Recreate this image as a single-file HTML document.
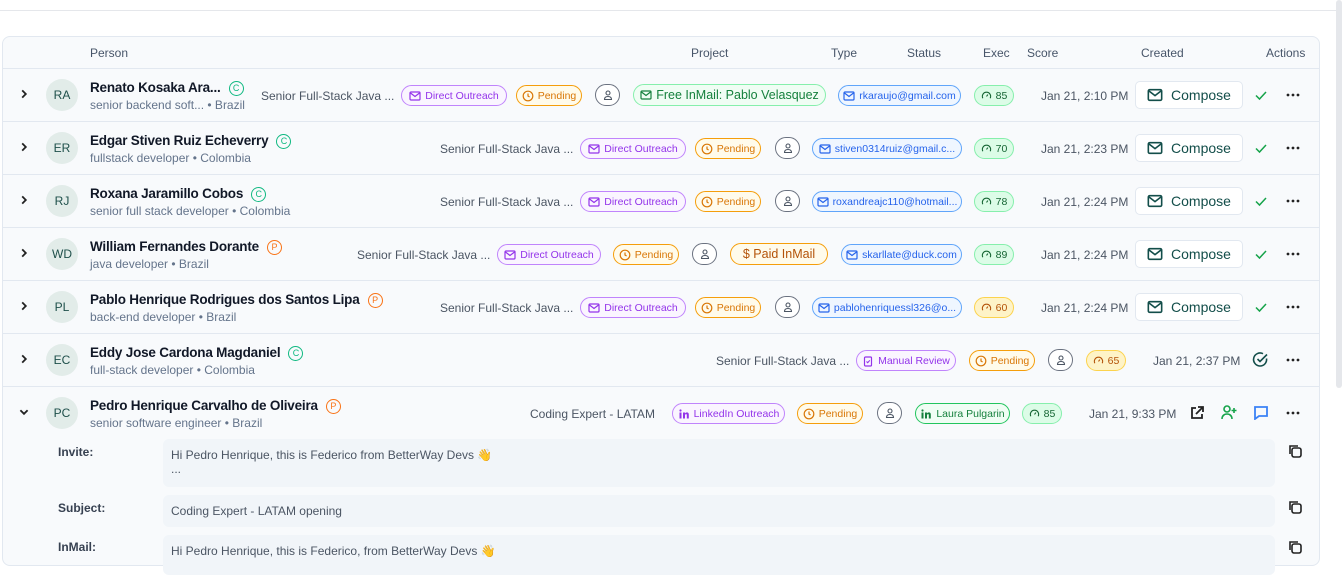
<!DOCTYPE html>
<html><head><meta charset="utf-8"><style>
*{margin:0;padding:0;box-sizing:border-box}
body{width:1342px;height:552px;overflow:hidden;background:#fff;font-family:"Liberation Sans",sans-serif;position:relative;color:#1f2937}
.a{position:absolute;white-space:nowrap}
.tbl{position:absolute;left:2px;top:36px;width:1318px;height:530px;border:1px solid #e2e8f0;border-radius:8px;background:#f8fafc}
.hl{position:absolute;left:3px;width:1316px;height:1px;background:#e2e8f0}
.th{position:absolute;top:46px;font-size:12px;color:#475569}
.p{position:absolute;height:21px;border:1px solid;border-radius:11px;font-size:10.5px;display:flex;align-items:center;justify-content:center;gap:4px;white-space:nowrap;overflow:hidden}
.p svg{flex:none}
.do{border-color:#c084fc;color:#9333ea;background:#faf5ff}
.pe{border-color:#f59e0b;color:#d97706;background:#fffbeb}
.em{border-color:#60a5fa;color:#2563eb;background:#eff6ff}
.sc{border-color:#86efac;color:#166534;background:#dcfce7}
.sy{border-color:#fcd34d;color:#b45309;background:#fef3c7}
.pr{border-color:#6b7280;background:#fff;width:25px;height:22px}
.gr{border-color:#86efac;color:#15803d;background:#f0fdf4}
.av{position:absolute;left:46px;width:32px;height:32px;border-radius:50%;background:#e2ece9;color:#1e4f4a;font-size:12px;display:flex;align-items:center;justify-content:center}
.nm{position:absolute;left:90px;font-size:13.5px;font-weight:bold;color:#111827;letter-spacing:-0.2px}
.sub{position:absolute;left:90px;font-size:12px;color:#64748b}
.bd{display:inline-flex;width:15px;height:15px;border-radius:50%;border:1.3px solid;font-size:9px;align-items:center;justify-content:center;font-weight:normal;vertical-align:1px;margin-left:8px}
.bc{border-color:#10b981;color:#10b981}.bp{border-color:#f97316;color:#f97316}
.prj{position:absolute;font-size:12px;color:#4b5563}
.dt{position:absolute;font-size:12px;color:#4b5563}
.cmp{position:absolute;left:1135px;width:108px;height:28px;border:1px solid #e2e8f0;border-radius:5px;background:#fff;display:flex;align-items:center;justify-content:center;gap:8px;font-size:14px;color:#134e4a}
.box{position:absolute;left:163px;width:1112px;background:#f1f5f9;border-radius:6px;font-size:12px;color:#4b5563;padding:9px 8px}
.lb{position:absolute;left:58px;font-size:12px;color:#374151;font-weight:bold}
.ch{position:absolute;left:18px}
.dots{position:absolute;left:1286px}
</style></head><body>
<svg width="0" height="0" style="position:absolute">
<defs>
<symbol id="mail" viewBox="0 0 12 12"><rect x="1" y="2" width="10" height="8" rx="1" fill="none" stroke="currentColor" stroke-width="1.2"/><path d="M1.5 3l4.5 3.5L10.5 3" fill="none" stroke="currentColor" stroke-width="1.2"/></symbol>
<symbol id="clk" viewBox="0 0 12 12"><circle cx="6" cy="6" r="4.8" fill="none" stroke="currentColor" stroke-width="1.2"/><path d="M6 3.5V6l1.6 1" fill="none" stroke="currentColor" stroke-width="1.2"/></symbol>
<symbol id="usr" viewBox="0 0 12 12"><circle cx="6" cy="4" r="2" fill="none" stroke="#4b5563" stroke-width="1.1"/><path d="M2.5 10.5c0-2 1.5-3 3.5-3s3.5 1 3.5 3z" fill="none" stroke="#4b5563" stroke-width="1.1"/></symbol>
<symbol id="gau" viewBox="0 0 12 12"><path d="M2 9a4.5 4.5 0 1 1 8 0M6 7l1.5-2" fill="none" stroke="currentColor" stroke-width="1.2"/></symbol>
<symbol id="chv" viewBox="0 0 10 10"><path d="M3.5 2l3 3-3 3" fill="none" stroke="#222" stroke-width="1.5"/></symbol>
<symbol id="dt3" viewBox="0 0 14 4"><circle cx="2" cy="2" r="1.4" fill="#222"/><circle cx="7" cy="2" r="1.4" fill="#222"/><circle cx="12" cy="2" r="1.4" fill="#222"/></symbol>
<symbol id="chk" viewBox="0 0 14 14"><path d="M2 7.5l3.5 3.5L12 4" fill="none" stroke="#16a34a" stroke-width="1.5"/></symbol>
<symbol id="li" viewBox="0 0 12 12"><rect x="1.5" y="4.5" width="2" height="6" fill="currentColor"/><circle cx="2.5" cy="2.5" r="1.1" fill="currentColor"/><path d="M5 10.5v-6h2v1c.5-.8 1.3-1.2 2.2-1.1 1 .1 1.6.9 1.6 2.1v4h-2V7c0-.6-.3-.9-.8-.9S7 6.5 7 7.1v3.4z" fill="currentColor"/></symbol>
<symbol id="clip" viewBox="0 0 12 12"><rect x="2.5" y="2" width="7" height="9" rx="1" fill="none" stroke="currentColor" stroke-width="1.2"/><path d="M4.5 6.5l1.2 1.2L7.8 5.3" fill="none" stroke="currentColor" stroke-width="1.1"/></symbol>
</defs></svg>
<div class="a" style="left:0;top:10px;width:1342px;height:1px;background:#e5e7eb"></div>
<div class="tbl"></div>
<div class="a" style="left:1336px;top:0;width:6px;height:388px;background:#e5e7eb;border-radius:3px"></div>
<div class="th" style="left:90px">Person</div>
<div class="th" style="left:691px">Project</div>
<div class="th" style="left:831px">Type</div>
<div class="th" style="left:907px">Status</div>
<div class="th" style="left:983px">Exec</div>
<div class="th" style="left:1027px">Score</div>
<div class="th" style="left:1141px">Created</div>
<div class="th" style="left:1266px">Actions</div>
<div class="hl" style="top:68px"></div>
<div class="hl" style="top:121px"></div>
<div class="hl" style="top:174px"></div>
<div class="hl" style="top:227px"></div>
<div class="hl" style="top:280px"></div>
<div class="hl" style="top:333px"></div>
<div class="hl" style="top:386px"></div>

<!-- Row 1 -->
<svg class="ch" style="top:88px" width="12" height="12"><use href="#chv"/></svg>
<div class="av" style="top:79px">RA</div>
<div class="nm" style="top:80px">Renato Kosaka Ara...<span class="bd bc">C</span></div>
<div class="sub" style="top:98px">senior backend soft... • Brazil</div>
<div class="prj" style="left:261px;top:89px">Senior Full-Stack Java ...</div>
<div class="p do" style="left:401px;top:85px;width:106px"><svg width="12" height="12"><use href="#mail"/></svg>Direct Outreach</div>
<div class="p pe" style="left:516px;top:85px;width:66px"><svg width="12" height="12"><use href="#clk"/></svg>Pending</div>
<div class="p pr" style="left:595px;top:84px"><svg width="12" height="12"><use href="#usr"/></svg></div>
<div class="p gr" style="left:633px;top:84px;width:193px;height:22px;font-size:12.5px"><svg width="12" height="12"><use href="#mail"/></svg>Free InMail: Pablo Velasquez</div>
<div class="p em" style="left:838px;top:85px;width:123px"><svg width="12" height="12"><use href="#mail"/></svg>rkaraujo@gmail.com</div>
<div class="p sc" style="left:974px;top:85px;width:40px"><svg width="11" height="11"><use href="#gau"/></svg>85</div>
<div class="dt" style="left:1041px;top:89px">Jan 21, 2:10 PM</div>
<div class="cmp" style="top:81px"><svg width="16" height="16"><use href="#mail"/></svg>Compose</div>
<svg class="a" style="left:1254px;top:88px" width="14" height="14"><use href="#chk"/></svg>
<svg class="dots" style="top:93px" width="14" height="4"><use href="#dt3"/></svg>

<!-- Row 2 -->
<svg class="ch" style="top:141px" width="12" height="12"><use href="#chv"/></svg>
<div class="av" style="top:132px">ER</div>
<div class="nm" style="top:133px">Edgar Stiven Ruiz Echeverry<span class="bd bc">C</span></div>
<div class="sub" style="top:151px">fullstack developer • Colombia</div>
<div class="prj" style="left:440px;top:142px">Senior Full-Stack Java ...</div>
<div class="p do" style="left:580px;top:138px;width:106px"><svg width="12" height="12"><use href="#mail"/></svg>Direct Outreach</div>
<div class="p pe" style="left:695px;top:138px;width:66px"><svg width="12" height="12"><use href="#clk"/></svg>Pending</div>
<div class="p pr" style="left:775px;top:137px"><svg width="12" height="12"><use href="#usr"/></svg></div>
<div class="p em" style="left:812px;top:138px;width:150px"><svg width="12" height="12"><use href="#mail"/></svg>stiven0314ruiz@gmail.c...</div>
<div class="p sc" style="left:974px;top:138px;width:40px"><svg width="11" height="11"><use href="#gau"/></svg>70</div>
<div class="dt" style="left:1041px;top:142px">Jan 21, 2:23 PM</div>
<div class="cmp" style="top:134px"><svg width="16" height="16"><use href="#mail"/></svg>Compose</div>
<svg class="a" style="left:1254px;top:141px" width="14" height="14"><use href="#chk"/></svg>
<svg class="dots" style="top:146px" width="14" height="4"><use href="#dt3"/></svg>

<!-- Row 3 -->
<svg class="ch" style="top:194px" width="12" height="12"><use href="#chv"/></svg>
<div class="av" style="top:185px">RJ</div>
<div class="nm" style="top:186px">Roxana Jaramillo Cobos<span class="bd bc">C</span></div>
<div class="sub" style="top:204px">senior full stack developer • Colombia</div>
<div class="prj" style="left:440px;top:195px">Senior Full-Stack Java ...</div>
<div class="p do" style="left:580px;top:191px;width:106px"><svg width="12" height="12"><use href="#mail"/></svg>Direct Outreach</div>
<div class="p pe" style="left:695px;top:191px;width:66px"><svg width="12" height="12"><use href="#clk"/></svg>Pending</div>
<div class="p pr" style="left:775px;top:190px"><svg width="12" height="12"><use href="#usr"/></svg></div>
<div class="p em" style="left:812px;top:191px;width:150px"><svg width="12" height="12"><use href="#mail"/></svg>roxandreajc110@hotmail...</div>
<div class="p sc" style="left:974px;top:191px;width:40px"><svg width="11" height="11"><use href="#gau"/></svg>78</div>
<div class="dt" style="left:1041px;top:195px">Jan 21, 2:24 PM</div>
<div class="cmp" style="top:187px"><svg width="16" height="16"><use href="#mail"/></svg>Compose</div>
<svg class="a" style="left:1254px;top:194px" width="14" height="14"><use href="#chk"/></svg>
<svg class="dots" style="top:199px" width="14" height="4"><use href="#dt3"/></svg>

<!-- Row 4 -->
<svg class="ch" style="top:247px" width="12" height="12"><use href="#chv"/></svg>
<div class="av" style="top:238px">WD</div>
<div class="nm" style="top:239px">William Fernandes Dorante<span class="bd bp">P</span></div>
<div class="sub" style="top:257px">java developer • Brazil</div>
<div class="prj" style="left:357px;top:248px">Senior Full-Stack Java ...</div>
<div class="p do" style="left:497px;top:244px;width:104px"><svg width="12" height="12"><use href="#mail"/></svg>Direct Outreach</div>
<div class="p pe" style="left:613px;top:244px;width:66px"><svg width="12" height="12"><use href="#clk"/></svg>Pending</div>
<div class="p pr" style="left:692px;top:243px"><svg width="12" height="12"><use href="#usr"/></svg></div>
<div class="p pe" style="left:730px;top:243px;width:98px;height:22px;font-size:12.5px;color:#b45309">$ Paid InMail</div>
<div class="p em" style="left:841px;top:244px;width:121px"><svg width="12" height="12"><use href="#mail"/></svg>skarllate@duck.com</div>
<div class="p sc" style="left:974px;top:244px;width:40px"><svg width="11" height="11"><use href="#gau"/></svg>89</div>
<div class="dt" style="left:1041px;top:248px">Jan 21, 2:24 PM</div>
<div class="cmp" style="top:240px"><svg width="16" height="16"><use href="#mail"/></svg>Compose</div>
<svg class="a" style="left:1254px;top:247px" width="14" height="14"><use href="#chk"/></svg>
<svg class="dots" style="top:252px" width="14" height="4"><use href="#dt3"/></svg>

<!-- Row 5 -->
<svg class="ch" style="top:300px" width="12" height="12"><use href="#chv"/></svg>
<div class="av" style="top:291px">PL</div>
<div class="nm" style="top:292px">Pablo Henrique Rodrigues dos Santos Lipa<span class="bd bp">P</span></div>
<div class="sub" style="top:310px">back-end developer • Brazil</div>
<div class="prj" style="left:440px;top:301px">Senior Full-Stack Java ...</div>
<div class="p do" style="left:580px;top:297px;width:106px"><svg width="12" height="12"><use href="#mail"/></svg>Direct Outreach</div>
<div class="p pe" style="left:695px;top:297px;width:66px"><svg width="12" height="12"><use href="#clk"/></svg>Pending</div>
<div class="p pr" style="left:775px;top:296px"><svg width="12" height="12"><use href="#usr"/></svg></div>
<div class="p em" style="left:812px;top:297px;width:150px"><svg width="12" height="12"><use href="#mail"/></svg>pablohenriquessl326@o...</div>
<div class="p sy" style="left:974px;top:297px;width:40px"><svg width="11" height="11"><use href="#gau"/></svg>60</div>
<div class="dt" style="left:1041px;top:301px">Jan 21, 2:24 PM</div>
<div class="cmp" style="top:293px"><svg width="16" height="16"><use href="#mail"/></svg>Compose</div>
<svg class="a" style="left:1254px;top:300px" width="14" height="14"><use href="#chk"/></svg>
<svg class="dots" style="top:305px" width="14" height="4"><use href="#dt3"/></svg>

<!-- Row 6 -->
<svg class="ch" style="top:353px" width="12" height="12"><use href="#chv"/></svg>
<div class="av" style="top:344px">EC</div>
<div class="nm" style="top:345px">Eddy Jose Cardona Magdaniel<span class="bd bc">C</span></div>
<div class="sub" style="top:363px">full-stack developer • Colombia</div>
<div class="prj" style="left:716px;top:354px">Senior Full-Stack Java ...</div>
<div class="p do" style="left:856px;top:350px;width:100px"><svg width="12" height="12"><use href="#clip"/></svg>Manual Review</div>
<div class="p pe" style="left:969px;top:350px;width:66px"><svg width="12" height="12"><use href="#clk"/></svg>Pending</div>
<div class="p pr" style="left:1048px;top:349px"><svg width="12" height="12"><use href="#usr"/></svg></div>
<div class="p sy" style="left:1086px;top:350px;width:40px"><svg width="11" height="11"><use href="#gau"/></svg>65</div>
<div class="dt" style="left:1153px;top:354px">Jan 21, 2:37 PM</div>
<svg class="a" style="left:1252px;top:351px" width="17" height="17" viewBox="0 0 17 17" fill="none" stroke="#134e4a" stroke-width="1.6"><path d="M14.5 7.5A6.5 6.5 0 1 1 11 2.7"/><path d="M5.5 8l2.5 2.5L15 3.5"/></svg>
<svg class="dots" style="top:358px" width="14" height="4"><use href="#dt3"/></svg>

<!-- Row 7 -->
<svg class="ch" style="top:406px" width="12" height="12" viewBox="0 0 10 10"><path d="M2 3.5l3 3 3-3" fill="none" stroke="#222" stroke-width="1.5"/></svg>
<div class="av" style="top:397px">PC</div>
<div class="nm" style="top:398px">Pedro Henrique Carvalho de Oliveira<span class="bd bp">P</span></div>
<div class="sub" style="top:416px">senior software engineer • Brazil</div>
<div class="prj" style="left:530px;top:407px">Coding Expert - LATAM</div>
<div class="p do" style="left:672px;top:403px;width:113px"><svg width="12" height="12"><use href="#li"/></svg>LinkedIn Outreach</div>
<div class="p pe" style="left:797px;top:403px;width:66px"><svg width="12" height="12"><use href="#clk"/></svg>Pending</div>
<div class="p pr" style="left:877px;top:402px"><svg width="12" height="12"><use href="#usr"/></svg></div>
<div class="p gr" style="left:915px;top:403px;width:95px;border-color:#22c55e"><svg width="12" height="12"><use href="#li"/></svg>Laura Pulgarin</div>
<div class="p sc" style="left:1022px;top:403px;width:40px"><svg width="11" height="11"><use href="#gau"/></svg>85</div>
<div class="dt" style="left:1089px;top:407px">Jan 21, 9:33 PM</div>
<svg class="a" style="left:1189px;top:405px" width="16" height="16" viewBox="0 0 16 16" fill="none" stroke="#222" stroke-width="1.8"><path d="M7 3H3v10h10V9M9 2h5v5M14 2L7 9"/></svg>
<svg class="a" style="left:1221px;top:404px" width="17" height="16" viewBox="0 0 17 16" fill="none" stroke="#16a34a" stroke-width="1.6"><circle cx="6" cy="5" r="3"/><path d="M1 15c0-3 2-5 5-5s5 2 5 5M13 4v5M10.5 6.5h5"/></svg>
<svg class="a" style="left:1253px;top:405px" width="16" height="15" viewBox="0 0 16 15" fill="none" stroke="#3b82f6" stroke-width="1.8"><path d="M2 2h12v9H6l-4 3z"/></svg>
<svg class="dots" style="top:411px" width="14" height="4"><use href="#dt3"/></svg>

<!-- expanded -->
<div class="lb" style="top:445px">Invite:</div>
<div class="box" style="top:439px;height:48px;line-height:14px">Hi Pedro Henrique, this is Federico from BetterWay Devs 👋<br>...</div>
<div class="lb" style="top:501px">Subject:</div>
<div class="box" style="top:495px;height:32px">Coding Expert - LATAM opening</div>
<div class="lb" style="top:540px">InMail:</div>
<div class="box" style="top:535px;height:40px">Hi Pedro Henrique, this is Federico, from BetterWay Devs 👋</div>
<svg class="a" style="left:1287px;top:443px" width="16" height="16" viewBox="0 0 16 16" fill="none" stroke="#222" stroke-width="1.6"><rect x="5" y="5" width="9" height="9" rx="2"/><path d="M3 11V3h8"/></svg>
<svg class="a" style="left:1287px;top:499px" width="16" height="16" viewBox="0 0 16 16" fill="none" stroke="#222" stroke-width="1.6"><rect x="5" y="5" width="9" height="9" rx="2"/><path d="M3 11V3h8"/></svg>
<svg class="a" style="left:1287px;top:539px" width="16" height="16" viewBox="0 0 16 16" fill="none" stroke="#222" stroke-width="1.6"><rect x="5" y="5" width="9" height="9" rx="2"/><path d="M3 11V3h8"/></svg>
</body></html>
